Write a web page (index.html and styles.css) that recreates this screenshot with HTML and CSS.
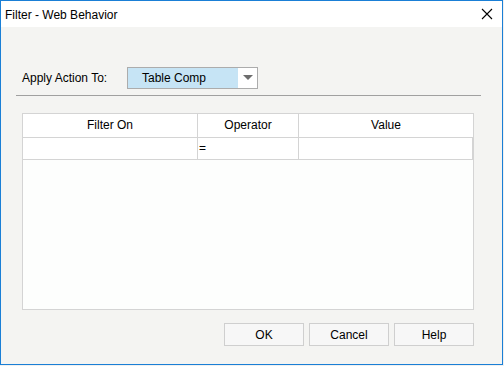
FILE: index.html
```html
<!DOCTYPE html>
<html lang="en">
  <head>
    <meta charset="UTF-8" />
    <title>Filter - Web Behavior</title>
    <link rel="stylesheet" href="styles.css">
  </head>
  <body>
    <!-- Dialog window -->
    <div class="dialog">
      <div class="title-bar">
        <span class="title">Filter - Web Behavior</span>
        <svg class="close" width="12" height="12" viewBox="0 0 12 12">
          <path d="M1 1 L11 11 M11 1 L1 11" stroke="#000" stroke-width="1.1" fill="none" />
        </svg>
      </div>

      <div class="dialog-body">
        <!-- Apply action row -->
        <div class="apply-row">
          <span class="label">Apply Action To:</span>
          <div class="combo">
            <span class="combo-text">Table Comp</span>
            <span class="combo-arrow">
              <svg width="10" height="6" viewBox="0 0 10 6">
                <path d="M0 0 L10 0 L5 5 Z" fill="#6d6d6d" />
              </svg>
            </span>
          </div>
        </div>

        <div class="separator"></div>

        <!-- Filter table -->
        <div class="filter-table">
          <div class="row header">
            <div class="cell">Filter On</div>
            <div class="cell">Operator</div>
            <div class="cell last">Value</div>
          </div>
          <div class="row data">
            <div class="cell"></div>
            <div class="cell op">=</div>
            <div class="cell last"></div>
          </div>
        </div>

        <!-- Buttons -->
        <div class="buttons">
          <button class="btn">OK</button>
          <button class="btn">Cancel</button>
          <button class="btn">Help</button>
        </div>
      </div>
    </div>
  </body>
</html>
```

FILE: styles.css
```css
body {
  margin: 0;
  padding: 0;
  background-color: #f0f0f0;
  font-family: "Liberation Sans", Arial, sans-serif;
  font-size: 12px;
  color: #000;
}

/* Window frame */
.dialog {
  width: 503px;
  height: 365px;
  box-sizing: border-box;
  border: 1px solid #1a7fd6;
  background-color: #f4f4f2;
  display: flex;
  flex-direction: column;
}

.title-bar {
  height: 26px;
  background-color: #fff;
  display: flex;
  align-items: center;
  justify-content: space-between;
  padding: 0 9px 0 4px;
}

.title {
  font-size: 12px;
  padding-top: 2px;
}

.close {
  display: block;
}

/* Body */
.dialog-body {
  padding: 40px 0 0 0;
  display: flex;
  flex-direction: column;
}

.apply-row {
  display: flex;
  align-items: center;
  height: 22px;
  padding-left: 21px;
}

.label {
  width: 105px;
}

.combo {
  width: 131px;
  height: 22px;
  box-sizing: border-box;
  border: 1px solid #acacac;
  display: flex;
}

.combo-text {
  flex: 1;
  background-color: #c6e4f5;
  padding-left: 14px;
  line-height: 20px;
}

.combo-arrow {
  width: 19px;
  background-color: #fff;
  display: flex;
  align-items: center;
  justify-content: center;
}

.separator {
  margin: 6px 0 0 15px;
  width: 465px;
  height: 1px;
  background-color: #a0a0a0;
}

/* Table */
.filter-table {
  margin: 17px 0 0 21px;
  width: 452px;
  height: 197px;
  box-sizing: border-box;
  border: 1px solid #d4d4d4;
  background-color: #fdfefd;
}

.row {
  display: grid;
  grid-template-columns: 175px 101px 1fr;
  background-color: #fff;
}

.cell {
  border-right: 1px solid #d4d4d4;
  border-bottom: 1px solid #d4d4d4;
}

.cell.last {
  border-right: none;
}

.header .cell {
  height: 23px;
  line-height: 23px;
  text-align: center;
}

.data .cell {
  height: 21px;
  line-height: 21px;
}

.data .cell.last {
  border-right: 1px solid #d4d4d4;
}

.op {
  padding-left: 1px;
}

/* Buttons */
.buttons {
  display: flex;
  justify-content: flex-end;
  gap: 5px;
  margin: 13px 0 0 0;
  padding-right: 28px;
}

.btn {
  width: 80px;
  height: 23px;
  border: 1px solid #cfcfcf;
  background-color: #f7f7f7;
  font-family: "Liberation Sans", Arial, sans-serif;
  font-size: 12px;
  color: #000;
  padding: 0;
}
```
